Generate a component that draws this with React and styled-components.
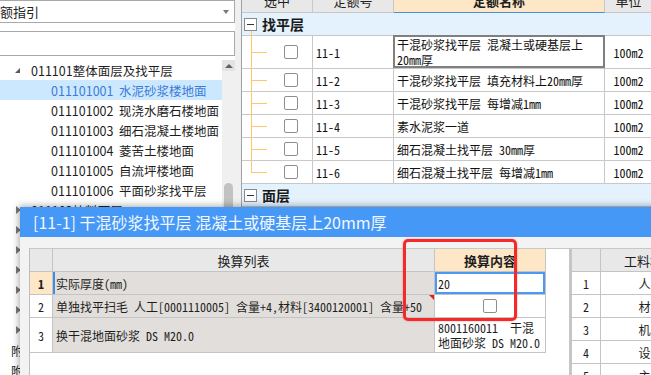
import React from 'react';
import styled, { createGlobalStyle } from 'styled-components';

const SONG = `"Noto Sans Mono CJK SC", "Noto Sans CJK SC", "Liberation Mono", monospace`;
const HEI = `"Noto Sans CJK SC", "Noto Sans", sans-serif`;

const GlobalStyle = createGlobalStyle`
  html, body { margin: 0; padding: 0; overflow: hidden; background: #fff; }
  body { font-family: ${HEI}; font-size: 12px; color: #1e1e1e; }
  * { box-sizing: border-box; }
`;

const treeItems = [
  { level: 1, text: '011101整体面层及找平层', open: true },
  { level: 2, text: '011101001  水泥砂浆楼地面', active: true },
  { level: 2, text: '011101002  现浇水磨石楼地面' },
  { level: 2, text: '011101003  细石混凝土楼地面' },
  { level: 2, text: '011101004  菱苦土楼地面' },
  { level: 2, text: '011101005  自流坪楼地面' },
  { level: 2, text: '011101006  平面砂浆找平层' },
  { level: 1, text: '011102块料面层' },
  { level: 1, text: '011103橡塑面层' },
  { level: 1, text: '011104其他材料面层' },
  { level: 1, text: '011105踢脚线' },
  { level: 1, text: '011106楼梯面层' },
  { level: 1, text: '011107台阶装饰' },
  { level: 1, text: '011108零星装饰项目' },
  { level: 0, text: '附录A 楼地面' },
  { level: 0, text: '附录B 说明' },
];

const quotas = [
  { code: '11-1', name: '干混砂浆找平层 混凝土或硬基层上20mm厚', h: 33, selected: true },
  { code: '11-2', name: '干混砂浆找平层 填充材料上20mm厚' },
  { code: '11-3', name: '干混砂浆找平层 每增减1mm' },
  { code: '11-4', name: '素水泥浆一道' },
  { code: '11-5', name: '细石混凝土找平层 30mm厚' },
  { code: '11-6', name: '细石混凝土找平层 每增减1mm' },
];

const resources = ['人工费', '材料费', '机械费', '设备费', '主材费'];

export default function App() {
  return (
    <>
      <GlobalStyle />
      <Page>
        <LeftPanel>
          <Combo>
            <span>定额指引</span>
            <Caret />
          </Combo>
          <Search />
          <TreeArea>
            <TreeList>
              {treeItems.map((item) => (
                <TreeRow key={item.text} $level={item.level} $active={item.active}>
                  {item.level === 1 && <Arrow $open={item.open} />}
                  {item.text}
                </TreeRow>
              ))}
            </TreeList>
            <ScrollBar>
              <ScrollBtn />
              <Thumb />
            </ScrollBar>
          </TreeArea>
        </LeftPanel>

        <QuotaGrid>
          <GridInner>
            <GridRow $h={24}>
              <HeadCell>选中</HeadCell>
              <HeadCell>定额号</HeadCell>
              <HeadCell $active>定额名称</HeadCell>
              <HeadCell>单位</HeadCell>
            </GridRow>
            <GroupRow>
              <MinusBox $line />
              找平层
            </GroupRow>
            {quotas.map((q, i) => (
              <GridRow key={q.code} $h={q.h || 23}>
                <SelectCell>
                  <Guide $last={i === quotas.length - 1} />
                  <Check />
                </SelectCell>
                <Cell>{q.code}</Cell>
                <Cell $selected={q.selected}>{q.name}</Cell>
                <Cell $center>100m2</Cell>
              </GridRow>
            ))}
            <GroupRow>
              <MinusBox />
              面层
            </GroupRow>
          </GridInner>
        </QuotaGrid>

        <Dialog>
          <TitleBar>[11-1] 干混砂浆找平层 混凝土或硬基层上20mm厚</TitleBar>
          <DialogBody>
            <CalcPane>
              <CalcRow $h={23}>
                <CalcHead />
                <CalcHead>换算列表</CalcHead>
                <CalcHead $active>换算内容</CalcHead>
              </CalcRow>
              <CalcRow $h={23}>
                <RowNum $current>1</RowNum>
                <ItemCell $current>实际厚度(mm)</ItemCell>
                <ValueCell $editing>20</ValueCell>
              </CalcRow>
              <CalcRow $h={23}>
                <RowNum>2</RowNum>
                <ItemCell $flag>单独找平扫毛 人工[0001110005] 含量+4,材料[3400120001] 含量+50</ItemCell>
                <ValueCell $center>
                  <Check />
                </ValueCell>
              </CalcRow>
              <CalcRow $h={35}>
                <RowNum>3</RowNum>
                <ItemCell>换干混地面砂浆 DS M20.0</ItemCell>
                <ValueCell $wrap>8001160011  干混地面砂浆 DS M20.0</ValueCell>
              </CalcRow>
            </CalcPane>
            <PaneSplitter />
            <ResourcePane>
              <ResRow>
                <ResHead />
                <ResHead>工料机显示</ResHead>
              </ResRow>
              {resources.map((r, i) => (
                <ResRow key={r}>
                  <ResCell>{i + 1}</ResCell>
                  <ResCell>{r}</ResCell>
                </ResRow>
              ))}
            </ResourcePane>
          </DialogBody>
        </Dialog>

        <Highlight />
      </Page>
    </>
  );
}

const Page = styled.div`
  position: relative;
  width: 651px;
  height: 375px;
  overflow: hidden;
  display: flex;
  background: #f0f0f0;
`;

/* ---------- left tree panel ---------- */

const LeftPanel = styled.aside`
  width: 235px;
  flex: none;
  display: flex;
  flex-direction: column;
  background: #fff;
`;

const Combo = styled.div`
  margin-left: -20px;
  height: 23px;
  border: 1px solid #a9a9a9;
  display: flex;
  align-items: center;
  justify-content: space-between;
  padding: 0 5px 0 6px;
  font-size: 13px;
  color: #222;
`;

const Caret = styled.i`
  width: 0;
  height: 0;
  border-left: 3px solid transparent;
  border-right: 3px solid transparent;
  border-top: 4px solid #777;
`;

const Search = styled.div`
  margin: 8px 0 0 -20px;
  height: 25px;
  border: 1px solid #a9a9a9;
  background: #fff;
`;

const TreeArea = styled.div`
  margin-top: 4px;
  flex: 1;
  display: flex;
  min-height: 0;
`;

const TreeList = styled.div`
  flex: 1;
  overflow: hidden;
`;

const TreeRow = styled.div`
  height: 20px;
  display: flex;
  align-items: center;
  white-space: pre;
  font-size: 12.5px;
  padding-left: ${(p) => ({ 0: 11, 1: 15, 2: 51 }[p.$level])}px;
  background: ${(p) => (p.$active ? '#cce8ff' : 'transparent')};
  color: ${(p) => (p.$active ? '#3b7ad6' : '#1e1e1e')};
`;

const Arrow = styled.i`
  width: 16px;
  height: 20px;
  flex: none;
  position: relative;
  &::before {
    content: '';
    position: absolute;
    left: ${(p) => (p.$open ? 0 : 1)}px;
    top: ${(p) => (p.$open ? 8 : 6)}px;
    border-style: solid;
    border-width: ${(p) => (p.$open ? '0 0 5px 5px' : '4px 0 4px 5px')};
    border-color: ${(p) =>
      p.$open ? 'transparent transparent #595959 transparent' : 'transparent transparent transparent #7a7a7a'};
  }
`;

const ScrollBar = styled.div`
  width: 13px;
  flex: none;
  background: #f0f0f0;
  display: flex;
  flex-direction: column;
  align-items: center;
`;

const ScrollBtn = styled.div`
  width: 13px;
  height: 11px;
  background: #e3e3e3;
  display: flex;
  align-items: center;
  justify-content: center;
  &::before {
    content: '';
    border-left: 4px solid transparent;
    border-right: 4px solid transparent;
    border-bottom: 4px solid #606060;
  }
`;

const Thumb = styled.div`
  margin-top: 112px;
  width: 9px;
  height: 70px;
  border-radius: 5px;
  background: #c2c2c2;
`;

/* ---------- quota grid ---------- */

const QuotaGrid = styled.section`
  flex: 1;
  margin-left: 6px;
  border-left: 1px solid #a0a0a0;
  background: #fff;
  overflow: hidden;
`;

const GridInner = styled.div`
  margin-top: -11px;
  width: 420px;
`;

const GridRow = styled.div`
  display: grid;
  grid-template-columns: 71px 81px 211px 48px;
  height: ${(p) => p.$h}px;
`;

const HeadCell = styled.div`
  display: flex;
  align-items: center;
  justify-content: center;
  white-space: nowrap;
  font-size: 13px;
  font-weight: ${(p) => (p.$active ? 700 : 400)};
  background: ${(p) => (p.$active ? '#fde7c7' : '#e8e8e8')};
  border-right: 1px solid #c8c8c8;
  border-bottom: 1px solid ${(p) => (p.$active ? '#4a90d9' : '#c8c8c8')};
`;

const GroupRow = styled.div`
  height: 23px;
  display: flex;
  align-items: center;
  gap: 5px;
  padding-left: 2px;
  background: #e4f2fd;
  border-bottom: 1px solid #c8c8c8;
  font-size: 14px;
  font-weight: 700;
  color: #1a1a1a;
`;

const MinusBox = styled.span`
  position: relative;
  width: 13px;
  height: 13px;
  flex: none;
  border: 1px solid #8a8a8a;
  background: #fff;
  &::before {
    content: '';
    position: absolute;
    left: 2px;
    right: 2px;
    top: 5px;
    height: 1px;
    background: #333;
  }
  &::after {
    content: '';
    display: ${(p) => (p.$line ? 'block' : 'none')};
    position: absolute;
    left: 6px;
    top: 12px;
    width: 1px;
    height: 6px;
    background: #ffc766;
  }
`;

const Cell = styled.div`
  position: relative;
  display: flex;
  align-items: center;
  justify-content: ${(p) => (p.$center ? 'center' : 'flex-start')};
  padding: 0 3px;
  white-space: ${(p) => (p.$center ? 'nowrap' : 'normal')};
  font-family: ${SONG};
  font-size: 12px;
  line-height: 15px;
  color: #111;
  border-right: 1px solid #c8c8c8;
  border-bottom: 1px solid #c8c8c8;
  &::after {
    content: '';
    display: ${(p) => (p.$selected ? 'block' : 'none')};
    position: absolute;
    inset: -1px -1px 0 -1px;
    border: 2px solid #7f7f7f;
  }
`;

const SelectCell = styled.div`
  display: flex;
  align-items: center;
  border-right: 1px solid #c8c8c8;
  border-bottom: 1px solid #c8c8c8;
`;

const Guide = styled.span`
  position: relative;
  align-self: stretch;
  width: 16px;
  margin-left: 9px;
  flex: none;
  &::before {
    content: '';
    position: absolute;
    left: 0;
    top: 0;
    bottom: ${(p) => (p.$last ? '50%' : '-1px')};
    width: 1px;
    background: #ffc766;
  }
  &::after {
    content: '';
    position: absolute;
    left: 0;
    top: 50%;
    width: 16px;
    height: 1px;
    background: #ffc766;
  }
`;

const Check = styled.span`
  display: inline-block;
  width: 14px;
  height: 14px;
  margin-left: 17px;
  border: 1px solid #8e8e8e;
  border-radius: 2px;
  background: #fff;
`;

/* ---------- dialog ---------- */

const Dialog = styled.div`
  position: absolute;
  left: 20px;
  top: 207px;
  width: 700px;
  height: 220px;
  background: #f3f3f3;
  box-shadow: -1px -1px 7px rgba(0, 0, 0, 0.35);
  display: flex;
  flex-direction: column;
`;

const TitleBar = styled.div`
  height: 30px;
  flex: none;
  display: flex;
  align-items: center;
  padding-left: 13px;
  background: #4598f6;
  color: #f2f7ff;
  font-size: 16px;
`;

const DialogBody = styled.div`
  flex: 1;
  display: flex;
  padding: 11px 0 0 9px;
`;

const CalcPane = styled.div`
  width: 540px;
  background: #fff;
  border-left: 1px solid #bdbdbd;
  border-top: 1px solid #c8c8c8;
`;

const CalcRow = styled.div`
  display: grid;
  grid-template-columns: 23px 382px 111px;
  height: ${(p) => p.$h}px;
`;

const CalcHead = styled.div`
  display: flex;
  align-items: center;
  justify-content: center;
  font-size: 13px;
  font-weight: ${(p) => (p.$active ? 700 : 400)};
  background: ${(p) => (p.$active ? '#fde7c7' : '#e8e8e8')};
  border-right: 1px solid #c4c4c4;
  border-bottom: 1px solid #c4c4c4;
`;

const RowNum = styled.div`
  display: flex;
  align-items: center;
  justify-content: center;
  font-family: ${SONG};
  font-size: 12px;
  font-weight: ${(p) => (p.$current ? 700 : 400)};
  background: ${(p) => (p.$current ? '#fde7c7' : '#fff')};
  border-right: 1px solid #c4c4c4;
  border-bottom: 1px solid #c4c4c4;
`;

const ItemCell = styled.div`
  position: relative;
  display: flex;
  align-items: center;
  padding-left: 3px;
  white-space: nowrap;
  overflow: hidden;
  font-family: ${SONG};
  font-size: 12px;
  background: #e2dedb;
  border-right: 1px solid #c4c4c4;
  border-bottom: 1px solid #c4c4c4;
  box-shadow: ${(p) => (p.$current ? 'inset 2px 0 0 #3c8ee8' : 'none')};
  &::after {
    content: '';
    display: ${(p) => (p.$flag ? 'block' : 'none')};
    position: absolute;
    top: 0;
    right: 0;
    border-top: 5px solid #e0201c;
    border-left: 5px solid transparent;
  }
`;

const ValueCell = styled.div`
  display: flex;
  align-items: center;
  justify-content: ${(p) => (p.$center ? 'center' : 'flex-start')};
  padding-left: ${(p) => (p.$center ? 0 : 3)}px;
  font-family: ${SONG};
  font-size: 12px;
  line-height: 15px;
  white-space: ${(p) => (p.$wrap ? 'pre-wrap' : 'nowrap')};
  background: #fff;
  border-right: 1px solid #c4c4c4;
  border-bottom: 1px solid #c4c4c4;
  box-shadow: ${(p) => (p.$editing ? 'inset 0 0 0 2px #4a9af5' : 'none')};
  ${Check} {
    margin-left: 0;
  }
`;

const PaneSplitter = styled.div`
  width: 3px;
  flex: none;
  background: #c6c6c6;
`;

const ResourcePane = styled.div`
  flex: 1;
  background: #fff;
  border-top: 1px solid #c8c8c8;
`;

const ResRow = styled.div`
  display: grid;
  grid-template-columns: 29px 112px;
  height: 23px;
`;

const ResHead = styled.div`
  display: flex;
  align-items: center;
  justify-content: center;
  font-size: 13px;
  background: #e8e8e8;
  border-right: 1px solid #c4c4c4;
  border-bottom: 1px solid #c4c4c4;
`;

const ResCell = styled.div`
  display: flex;
  align-items: center;
  justify-content: center;
  font-family: ${SONG};
  font-size: 12px;
  border-right: 1px solid #c4c4c4;
  border-bottom: 1px solid #c4c4c4;
`;

/* annotation drawn over the dialog */
const Highlight = styled.div`
  position: absolute;
  left: 403px;
  top: 239px;
  width: 114px;
  height: 82px;
  border: 3px solid #f42a2a;
  border-radius: 5px;
  box-shadow: 0 0 2px rgba(244, 42, 42, 0.5);
  pointer-events: none;
`;
